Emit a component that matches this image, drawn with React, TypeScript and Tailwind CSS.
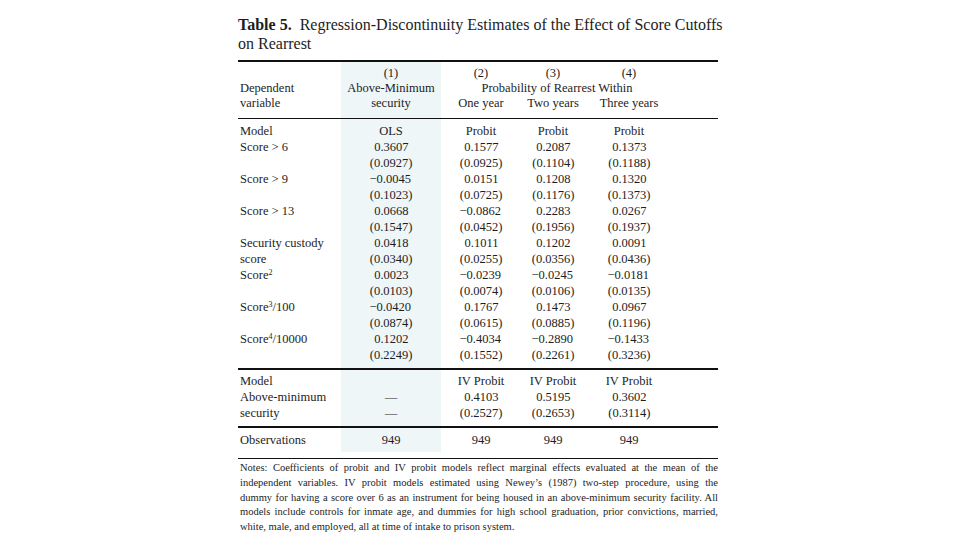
import type { ReactNode } from "react";

const grid = "grid grid-cols-[103px_100px_80px_64px_88px_1fr]";

type Row = [ReactNode, string, string, string, string];

const body: Row[] = [
  ["Model", "OLS", "Probit", "Probit", "Probit"],
  ["Score > 6", "0.3607", "0.1577", "0.2087", "0.1373"],
  ["", "(0.0927)", "(0.0925)", "(0.1104)", "(0.1188)"],
  ["Score > 9", "\u22120.0045", "0.0151", "0.1208", "0.1320"],
  ["", "(0.1023)", "(0.0725)", "(0.1176)", "(0.1373)"],
  ["Score > 13", "0.0668", "\u22120.0862", "0.2283", "0.0267"],
  ["", "(0.1547)", "(0.0452)", "(0.1956)", "(0.1937)"],
  ["Security custody", "0.0418", "0.1011", "0.1202", "0.0091"],
  ["score", "(0.0340)", "(0.0255)", "(0.0356)", "(0.0436)"],
  [<>Score<sup className="text-[8px]">2</sup></>, "0.0023", "\u22120.0239", "\u22120.0245", "\u22120.0181"],
  ["", "(0.0103)", "(0.0074)", "(0.0106)", "(0.0135)"],
  [<>Score<sup className="text-[8px]">3</sup>/100</>, "\u22120.0420", "0.1767", "0.1473", "0.0967"],
  ["", "(0.0874)", "(0.0615)", "(0.0885)", "(0.1196)"],
  [<>Score<sup className="text-[8px]">4</sup>/10000</>, "0.1202", "\u22120.4034", "\u22120.2890", "\u22120.1433"],
  ["", "(0.2249)", "(0.1552)", "(0.2261)", "(0.3236)"],
];

const second: Row[] = [
  ["Model", "", "IV Probit", "IV Probit", "IV Probit"],
  ["Above-minimum", "\u2014", "0.4103", "0.5195", "0.3602"],
  ["security", "\u2014", "(0.2527)", "(0.2653)", "(0.3114)"],
];

const notes = [
  "Notes: Coefficients of probit and IV probit models reflect marginal effects evaluated at the mean of the",
  "independent variables. IV probit models estimated using Newey\u2019s (1987) two-step procedure, using the",
  "dummy for having a score over 6 as an instrument for being housed in an above-minimum security facility. All",
  "models include controls for inmate age, and dummies for high school graduation, prior convictions, married,",
  "white, male, and employed, all at time of intake to prison system.",
];

function Cell({ v }: { v: string }) {
  const isNum = /[0-9]\.[0-9]/.test(v);
  if (!isNum) return <div className="text-center">{v}</div>;
  const paren = v.startsWith("(");
  return (
    <div className="flex justify-center">
      <span className={paren ? "inline-block w-[43px] text-right" : "inline-block w-[43px] text-right pr-[4px]"}>
        {v}
      </span>
    </div>
  );
}

function DataRow({ row }: { row: Row }) {
  return (
    <div className={`${grid} h-[16px] leading-[16px]`}>
      <div className="pl-[2px] whitespace-nowrap">{row[0]}</div>
      <Cell v={row[1]} />
      <Cell v={row[2]} />
      <Cell v={row[3]} />
      <Cell v={row[4]} />
      <div />
    </div>
  );
}

export default function App() {
  return (
    <div className="w-[960px] h-[540px] bg-white overflow-hidden pl-[238px] pt-[15px] text-[#1d1d1d] font-['Liberation_Serif',serif]">
      <div className="w-[480px]">
        <div className="text-[16px] leading-[19px] whitespace-nowrap">
          <span className="font-bold">Table 5.</span>&nbsp; Regression-Discontinuity Estimates of the Effect of Score Cutoffs
          <br />
          on Rearrest
        </div>

        <div className="mt-[7px] h-[2px] bg-[#111]" />

        <div className="text-[12.5px] bg-[linear-gradient(to_right,transparent_103px,#eef6f8_103px,#eef6f8_203px,transparent_203px)]">
          {/* header */}
          <div className="pt-[4px] pb-[7px]">
            <div className={`${grid} h-[15px] leading-[15px] text-center`}>
              <div />
              <div>(1)</div>
              <div>(2)</div>
              <div>(3)</div>
              <div>(4)</div>
              <div />
            </div>
            <div className={`${grid} h-[15px] leading-[15px] text-center`}>
              <div className="text-left pl-[2px]">Dependent</div>
              <div className="whitespace-nowrap">Above-Minimum</div>
              <div className="col-span-3 whitespace-nowrap">Probability of Rearrest Within</div>
              <div />
            </div>
            <div className={`${grid} h-[15px] leading-[15px] text-center`}>
              <div className="text-left pl-[2px]">variable</div>
              <div>security</div>
              <div>One year</div>
              <div className="whitespace-nowrap">Two years</div>
              <div className="whitespace-nowrap">Three years</div>
              <div />
            </div>
          </div>

          <div className="h-[1px] bg-[#111]" />

          <div className="pt-[4px] pb-[5px]">
            {body.map((r, i) => (
              <DataRow key={i} row={r} />
            ))}
          </div>

          <div className="h-[2px] bg-[#111]" />

          <div className="pt-[3px] pb-[5px]">
            {second.map((r, i) => (
              <DataRow key={i} row={r} />
            ))}
          </div>

          <div className="h-[2px] bg-[#111]" />

          <div className="pt-[4px] pb-[4px]">
            <div className={`${grid} h-[16px] leading-[16px]`}>
              <div className="pl-[2px]">Observations</div>
              <div className="text-center">949</div>
              <div className="text-center">949</div>
              <div className="text-center">949</div>
              <div className="text-center">949</div>
              <div />
            </div>
          </div>
        </div>

        <div className="mt-[6px] h-[1px] bg-[#111]" />

        <div className="mt-[2px] text-[10.5px] leading-[14.8px] pl-[2px]">
          {notes.map((l, i) => (
            <div
              key={i}
              className={i < notes.length - 1 ? "whitespace-nowrap text-justify [text-align-last:justify]" : "whitespace-nowrap"}
            >
              {l}
            </div>
          ))}
        </div>
      </div>
    </div>
  );
}
